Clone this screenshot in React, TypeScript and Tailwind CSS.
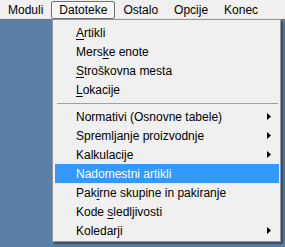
import React from "react";

const font = { fontFamily: '"Liberation Sans", Arial, sans-serif' };

function Arrow() {
  return (
    <svg width="4" height="7" viewBox="0 0 4 7" className="block">
      <path d="M0 0 L4 3.5 L0 7 Z" fill="#000" />
    </svg>
  );
}

type Item = { pre: string; u?: string; post?: string; sub?: boolean; hl?: boolean };

const group1: Item[] = [
  { pre: "", u: "A", post: "rtikli" },
  { pre: "Mers", u: "k", post: "e enote" },
  { pre: "", u: "S", post: "troškovna mesta" },
  { pre: "", u: "L", post: "okacije" },
];
const group2: Item[] = [
  { pre: "Normativi (Osnovne tabele)", sub: true },
  { pre: "Spremljanje proizvodnje", sub: true },
  { pre: "Kalkulacije", sub: true },
  { pre: "Nadomestni artikli", hl: true },
  { pre: "Pak", u: "i", post: "rne skupine in pakiranje" },
  { pre: "Kode ", u: "s", post: "ledljivosti" },
  { pre: "Koledarji", sub: true },
];

function Row({ it }: { it: Item }) {
  return (
    <div
      className={`flex items-center h-[19px] pl-[21px] pr-[8px] ${
        it.hl ? "bg-[#3399ff] text-white" : "text-black"
      }`}
    >
      <span className="flex-1 whitespace-pre leading-none">
        {it.pre}
        {it.u && <span className="underline underline-offset-[2px]">{it.u}</span>}
        {it.post}
      </span>
      {it.sub && <Arrow />}
    </div>
  );
}

export default function App() {
  const menus = ["Moduli", "Datoteke", "Ostalo", "Opcije", "Konec"];
  return (
    <div className="relative w-[285px] h-[247px] bg-[#5b80a8] overflow-hidden text-[12px]" style={font}>
      <div className="flex h-[19px] bg-[#f0f0f0] pl-0 items-center border-b border-[#e6e6e6]">
        {menus.map((m) => (
          <div
            key={m}
            className={`h-[18px] mt-[1px] flex items-center px-[7px] rounded-[2px] ${
              m === "Datoteke" ? "border border-[#707070] bg-[#f6f6f6]" : "border border-transparent"
            }`}
          >
            {m}
          </div>
        ))}
      </div>
      <div className="absolute left-[52px] top-[19px] w-[229px] h-[223px] bg-[#f0f0f0] border border-[#979797] shadow-[2px_2px_2px_rgba(0,0,0,0.45)] pt-[3px] pl-[2px] pr-[1px]">
        {group1.map((it, i) => (
          <Row key={i} it={it} />
        ))}
        <div className="h-[8px] flex items-center pl-[2px] pr-[1px]">
          <div className="h-px w-full bg-[#a0a0a0]" />
        </div>
        {group2.map((it, i) => (
          <Row key={i} it={it} />
        ))}
      </div>
    </div>
  );
}
